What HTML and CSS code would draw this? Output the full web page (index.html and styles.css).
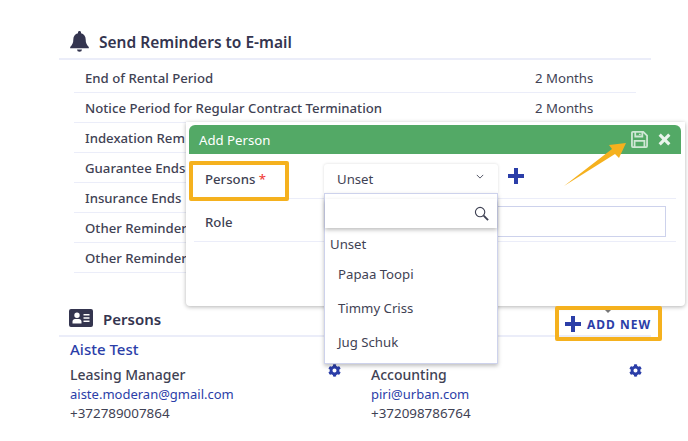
FILE: index.html
```html
<!DOCTYPE html>
<html lang="en">
<head>
    <meta charset="UTF-8">
    <meta name="viewport" content="width=device-width, initial-scale=1.0">
    <title>Add Person</title>
    <link rel="stylesheet" href="styles.css">
</head>
<body>
    <div class="page">
        <div class="section-head reminders-head">
            <svg class="bell" viewBox="0 0 20 22"><path d="M10 0c-1 0-1.600.7-1.600 1.600v.7C5.300 3 3.500 5.500 3.500 8.700c0 4.300-1.200 6-3.300 8v1.500h19.600v-1.500c-2.100-2-3.300-3.700-3.300-8 0-3.200-1.800-5.700-4.900-6.400v-.7C11.600.7 11 0 10 0zM7.400 19.300a2.600 2.600 0 0 0 5.200 0z"/></svg>
            <h2>Send Reminders to E-mail</h2>
        </div>
        <ul class="reminders">
            <li><span>End of Rental Period</span><span class="period">2 Months</span></li>
            <li><span>Notice Period for Regular Contract Termination</span><span class="period">2 Months</span></li>
            <li><span>Indexation Rem</span></li>
            <li><span>Guarantee Ends</span></li>
            <li><span>Insurance Ends</span></li>
            <li><span>Other Reminder</span></li>
            <li><span>Other Reminder</span></li>
        </ul>

        <div class="section-head persons-head">
            <svg class="card-icon" viewBox="0 0 24 18"><path fill-rule="evenodd" d="M2 0h20a2 2 0 0 1 2 2v14a2 2 0 0 1-2 2H2a2 2 0 0 1-2-2V2a2 2 0 0 1 2-2zM8 3.500a2.700 2.700 0 1 0 0 5.400 2.700 2.700 0 0 0 0-5.400zM3.500 14.500h9v-2c0-1.500-1.200-2.600-2.500-2.600H6c-1.300 0-2.500 1.100-2.500 2.600zM14.500 5v1.500h6V5zM14.500 8.200v1.500h6V8.200zM14.500 11.400v1.500h6v-1.500z"/></svg>
            <h2>Persons</h2>
            <a class="add-new">
                <svg class="plus" viewBox="0 0 16 16"><path d="M6 0h4v6h6v4h-6v6H6v-6H0V6h6z"/></svg>
                ADD NEW
            </a>
        </div>
        <div class="person-name">Aiste Test</div>
        <div class="contacts">
            <div class="contact">
                <div class="contact-role">Leasing Manager
                    <svg class="gear" viewBox="0 0 512 512"><path d="M487 316l-42-25a190 190 0 0 0 0-70l42-25c5-3 7-9 5-14-11-35-30-67-54-93-4-4-10-5-15-2l-42 24a190 190 0 0 0-61-35V28c0-6-4-11-9-12-36-8-73-8-107 0-6 1-9 6-9 12v48a190 190 0 0 0-61 35L92 87c-5-3-11-2-15 2-24 26-43 58-54 93-2 5 0 11 5 14l42 25a190 190 0 0 0 0 70l-42 25c-5 3-7 9-5 14 11 35 30 67 54 93 4 4 10 5 15 2l42-24a190 190 0 0 0 61 35v48c0 6 4 11 9 12 36 8 73 8 107 0 6-1 9-6 9-12v-48a190 190 0 0 0 61-35l42 24c5 3 11 2 15-2 24-26 43-58 54-93 2-5 0-11-5-14zM256 336a80 80 0 1 1 0-160 80 80 0 0 1 0 160z"/></svg>
                </div>
                <div class="contact-mail">aiste.moderan@gmail.com</div>
                <div class="contact-phone">+372789007864</div>
            </div>
            <div class="contact">
                <div class="contact-role">Accounting
                    <svg class="gear" viewBox="0 0 512 512"><path d="M487 316l-42-25a190 190 0 0 0 0-70l42-25c5-3 7-9 5-14-11-35-30-67-54-93-4-4-10-5-15-2l-42 24a190 190 0 0 0-61-35V28c0-6-4-11-9-12-36-8-73-8-107 0-6 1-9 6-9 12v48a190 190 0 0 0-61 35L92 87c-5-3-11-2-15 2-24 26-43 58-54 93-2 5 0 11 5 14l42 25a190 190 0 0 0 0 70l-42 25c-5 3-7 9-5 14 11 35 30 67 54 93 4 4 10 5 15 2l42-24a190 190 0 0 0 61 35v48c0 6 4 11 9 12 36 8 73 8 107 0 6-1 9-6 9-12v-48a190 190 0 0 0 61-35l42 24c5 3 11 2 15-2 24-26 43-58 54-93 2-5 0-11-5-14zM256 336a80 80 0 1 1 0-160 80 80 0 0 1 0 160z"/></svg>
                </div>
                <div class="contact-mail">piri@urban.com</div>
                <div class="contact-phone">+372098786764</div>
            </div>
        </div>
    </div>

    <!-- popup over the page -->
    <div class="modal">
        <div class="modal-head">
            <span>Add Person</span>
            <div class="modal-actions">
                <svg class="save" viewBox="0 0 18 18"><path fill="none" stroke="currentColor" stroke-width="1.900" d="M2 1h11l4 4v11a1 1 0 0 1-1 1H2a1 1 0 0 1-1-1V2a1 1 0 0 1 1-1zM4.500 1.200v4.600h7.500V1.200M9.300 2.800v1.500M3.800 16.800v-6.300h10.400v6.300"/></svg>
                <svg class="close" viewBox="0 0 14 14"><path d="M3 .6L7 4.600l4-4L13.400 3l-4 4 4 4-2.400 2.400-4-4-4 4L.6 11l4-4-4-4z"/></svg>
            </div>
        </div>
        <div class="modal-row persons-row">
            <label>Persons <span class="req">*</span></label>
            <svg class="plus" viewBox="0 0 16 16"><path d="M6 0h4v6h6v4h-6v6H6v-6H0V6h6z"/></svg>
        </div>
        <div class="modal-row role-row">
            <label>Role</label>
            <div class="role-input"></div>
        </div>
    </div>

    <div class="select-box">
        <div class="select-value">
            <span>Unset</span>
            <svg class="chevron" viewBox="0 0 10 6"><path fill="none" stroke="currentColor" stroke-width="1.100" d="M1 1l4 4 4-4"/></svg>
        </div>
        <div class="select-menu">
            <div class="select-search">
                <svg class="search" viewBox="0 0 16 16"><circle cx="6.500" cy="6.500" r="5" fill="none" stroke="currentColor" stroke-width="1.200"/><path d="M10.300 10.300l4.700 4.700" stroke="currentColor" stroke-width="2"/></svg>
            </div>
            <div class="option unset">Unset</div>
            <div class="option">Papaa Toopi</div>
            <div class="option">Timmy Criss</div>
            <div class="option">Jug Schuk</div>
        </div>
    </div>

    <!-- tutorial marks -->
    <div class="mark mark-persons"></div>
    <div class="mark mark-add"></div>
    <div class="caret"></div>
    <svg class="arrow" viewBox="0 0 62 43"><path d="M0 43L48 6 45 2 62 0 55 15 51 11z"/></svg>
</body>
</html>
```

FILE: styles.css
```css
* {
    box-sizing: border-box;
}

body {
    font-family: "Noto Sans", "Open Sans", sans-serif;
    margin: 0;
    background: #fff;
    color: #3f4254;
    font-size: 13.2px;
    overflow: hidden;
}

.page {
    width: 592px;
    margin-left: 59px;
    padding-top: 29px;
}

.section-head {
    display: flex;
    align-items: center;
    border-bottom: 2px solid #ebedf9;
}

.section-head h2 {
    margin: 0;
    font-size: 15.500px;
    font-weight: 600;
    color: #34354f;
}

.reminders-head {
    height: 31px;
    padding: 0 0 4px 11px;
    gap: 10px;
}

.bell {
    width: 19px;
    height: 21px;
    fill: #34354f;
}

.reminders {
    list-style: none;
    margin: 3px 15px 0;
    padding: 0;
}

.reminders li {
    display: flex;
    justify-content: space-between;
    align-items: center;
    height: 30px;
    padding: 0 43px 0 11px;
    border-bottom: 1px solid #ebedf9;
    font-weight: 500;
}

.reminders .period {
    width: 58px;
    font-weight: 400;
    white-space: nowrap;
}

.persons-head {
    height: 34px;
    margin-top: 30px;
    padding-left: 10px;
    gap: 10px;
}

.persons-head h2 {
    font-size: 15px;
}

.card-icon {
    width: 24px;
    height: 18px;
    margin-bottom: 3px;
    fill: #34354f;
}

.add-new {
    display: flex;
    align-items: center;
    gap: 6px;
    margin: 10px 0 0 auto;
    font-size: 12px;
    font-weight: 700;
    letter-spacing: 1px;
    color: #2b3ea8;
}

.plus {
    width: 16px;
    height: 16px;
    fill: #2b3ea8;
}

.person-name {
    margin: 2px 0 0 11px;
    font-size: 15px;
    font-weight: 500;
    color: #2b3ea8;
}

.contacts {
    display: grid;
    grid-template-columns: 301px 275px;
    margin: 5px 0 0 11px;
}

.contact-role {
    display: flex;
    justify-content: space-between;
    align-items: flex-start;
    padding-right: 30px;
    font-size: 14px;
    font-weight: 500;
    line-height: 21px;
}

.contact + .contact .contact-role {
    padding-right: 4px;
}

.gear {
    width: 13px;
    height: 13px;
    fill: #2b3ea8;
    flex: none;
}

.contact-mail {
    font-size: 13px;
    line-height: 18px;
    color: #2b3ea8;
}

.contact-phone {
    font-size: 13.400px;
    line-height: 20px;
}

.modal {
    position: absolute;
    left: 186px;
    top: 122px;
    width: 499px;
    height: 184px;
    padding: 3px 4px 0 3px;
    background: #fff;
    border-radius: 0 0 4px 4px;
    box-shadow: 0 1px 4px rgba(0, 0, 0, 0.3);
}

.modal-head {
    display: flex;
    justify-content: space-between;
    align-items: center;
    height: 29px;
    padding: 0 10px;
    background: #53a966;
    border-radius: 6px 6px 0 0;
    color: #fff;
}

.modal-actions {
    display: flex;
    align-items: center;
    gap: 10px;
}

.save {
    width: 17px;
    height: 17px;
    color: #cfe7d5;
}

.close {
    width: 13px;
    height: 13px;
    fill: #e9f4ec;
}

.modal-row {
    display: flex;
    align-items: center;
    width: 482px;
    margin-left: 5px;
    padding-left: 11px;
    border-bottom: 1px solid #ebedf9;
    font-weight: 500;
}

.modal-row .req {
    color: #f1413d;
}

.persons-row {
    height: 45px;
}

.persons-row label {
    width: 303px;
    padding-top: 6px;
}

.role-row {
    height: 43px;
    padding-top: 3px;
    justify-content: space-between;
}

.role-input {
    width: 290px;
    height: 31px;
    margin-right: 10px;
    border: 1px solid #cdd2ec;
}

.select-box {
    position: absolute;
    left: 324px;
    top: 164px;
    width: 174px;
}

.select-value {
    display: flex;
    justify-content: space-between;
    align-items: center;
    height: 29px;
    padding: 0 14px 0 13px;
    background: #fff;
    border-radius: 3px 3px 0 0;
    box-shadow: 0 0 3px rgba(0, 0, 0, 0.15);
}

.chevron {
    width: 8px;
    height: 5px;
    margin-bottom: 4px;
    color: #3f4254;
}

.select-menu {
    height: 171px;
    background: #fff;
    border: 1px solid #cdd2ec;
    box-shadow: 0 2px 4px rgba(0, 0, 0, 0.25);
}

.select-search {
    display: flex;
    justify-content: flex-end;
    align-items: center;
    height: 29px;
    margin-top: 5px;
    padding-right: 8px;
    box-shadow: 0 2px 4px rgba(0, 0, 0, 0.25);
}

.search {
    width: 15px;
    height: 15px;
    color: #3f4254;
}

.option {
    height: 34px;
    line-height: 34px;
    padding-left: 13px;
}

.option.unset {
    height: 29px;
    padding: 3px 0 0 5px;
    line-height: 26px;
}

.mark {
    position: absolute;
    border: 4px solid #f5b11e;
    border-radius: 2px;
}

.mark-persons {
    left: 189px;
    top: 161px;
    width: 100px;
    height: 40px;
}

.mark-add {
    left: 555px;
    top: 306px;
    width: 107px;
    height: 35px;
}

.caret {
    position: absolute;
    left: 605px;
    top: 310px;
    border: 3px solid transparent;
    border-top: 3px solid #777;
    border-bottom: 0;
}

.arrow {
    position: absolute;
    left: 564px;
    top: 143px;
    width: 62px;
    height: 43px;
    fill: #f5b11e;
}
```
